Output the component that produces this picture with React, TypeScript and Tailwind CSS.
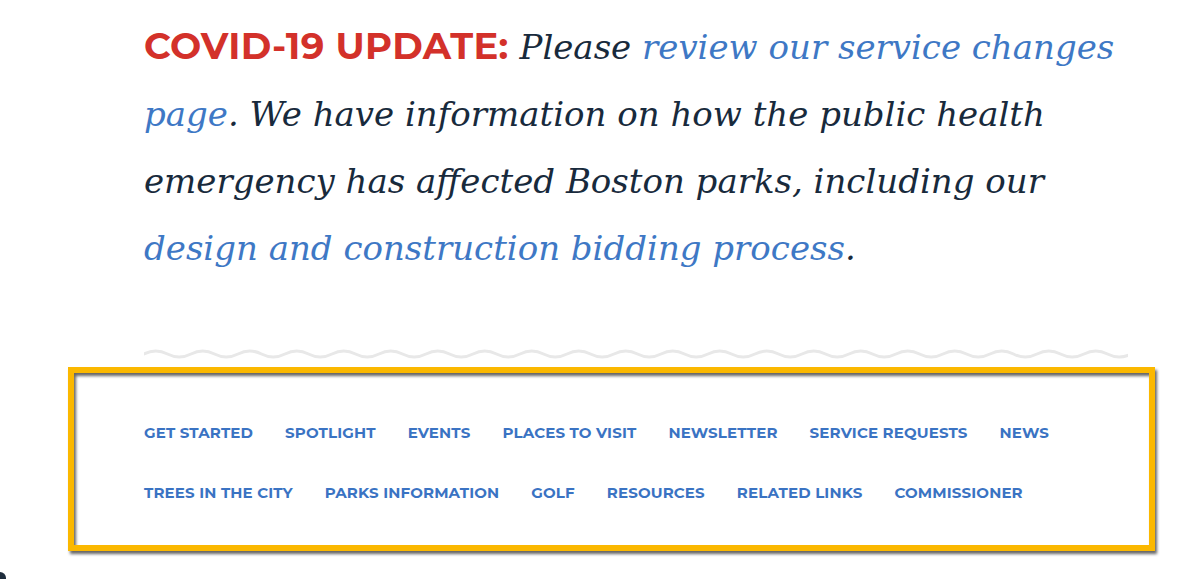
import React from "react";

const serif = { fontFamily: '"DejaVu Serif", serif' };

const navLinks = [
  "Get Started",
  "Spotlight",
  "Events",
  "Places to Visit",
  "Newsletter",
  "Service Requests",
  "News",
  "Trees in the City",
  "Parks Information",
  "Golf",
  "Resources",
  "Related Links",
  "Commissioner",
];

// squiggly divider, one period every 47px
function Wave({ width }: { width: number }) {
  const half = 23.5;
  let d = `M0 6 Q ${half / 2} 0 ${half} 6`;
  for (let x = half * 2; x <= width + half; x += half) {
    d += ` T ${x} 6`;
  }
  return (
    <svg width={width} height={12} viewBox={`0 0 ${width} 12`} className="block overflow-hidden">
      <path d={d} fill="none" stroke="#e8e8e8" strokeWidth={3} strokeLinecap="round" />
    </svg>
  );
}

export default function App() {
  return (
    <div className="relative h-[579px] w-[1200px] overflow-hidden bg-white">
      <div className="ml-[144px] w-[984px] pt-[12px]">
        <p className="text-[34px] leading-[67px] text-[#182a3c]" style={serif}>
          <span className="font-['Montserrat','DejaVu_Sans',sans-serif] text-[37px] font-bold not-italic tracking-[0.4px] text-[#d3312a]">
            COVID-19 UPDATE:
          </span>{" "}
          <span className="italic">
            Please{" "}
            <a href="#" className="text-[#3e78c5]">
              review our service changes page
            </a>
            . We have information on how the public health emergency has affected Boston parks, including our{" "}
            <a href="#" className="text-[#3e78c5]">
              design and construction bidding process
            </a>
            .
          </span>
        </p>

        <div className="mt-[66px]">
          <Wave width={984} />
        </div>

        <nav className="mt-[63px] flex flex-wrap gap-x-8 gap-y-[40px]">
          {navLinks.map((link) => (
            <a
              key={link}
              href="#"
              className="font-['Montserrat','DejaVu_Sans',sans-serif] text-[15px] leading-[20px] font-bold tracking-[0.15px] text-[#3a73c3] uppercase"
            >
              {link}
            </a>
          ))}
        </nav>
      </div>

      {/* yellow highlight frame */}
      <div className="pointer-events-none absolute top-[367px] left-[68px] h-[184px] w-[1087px] border-[6px] border-[#fbb800] drop-shadow-[2px_3px_1.5px_rgba(0,0,0,0.6)]" />

      <div className="absolute bottom-0 left-0 h-[7px] w-[6px] rounded-tr-full bg-[#1f2d3c]" />
    </div>
  );
}
